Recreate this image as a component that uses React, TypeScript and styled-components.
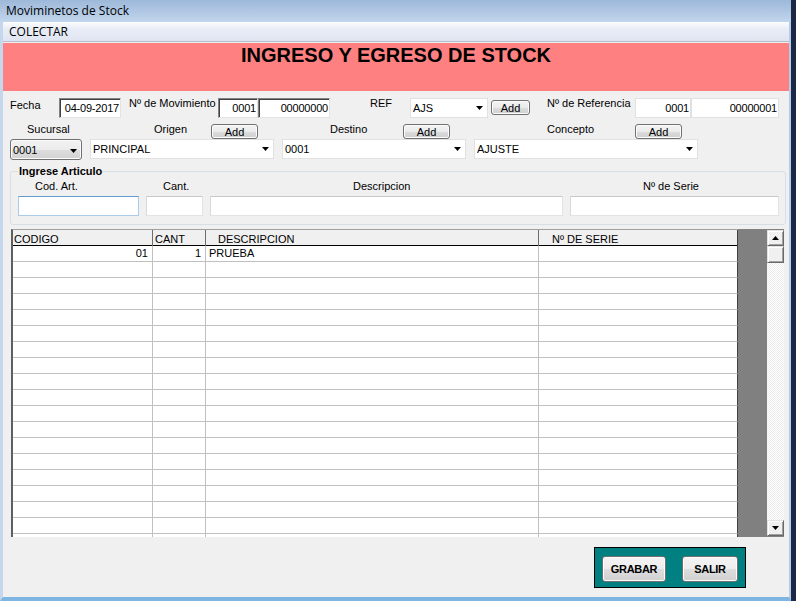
import React from 'react';
import styled, { createGlobalStyle, css } from 'styled-components';

const GlobalStyle = createGlobalStyle`
    html, body {
        margin: 0;
        padding: 0;
        background: #1b2946;
    }
    body {
        font-family: "Liberation Sans", Arial, sans-serif;
        font-size: 11px;
        color: #000;
    }
    * {
        box-sizing: border-box;
    }
`;

const Window = styled.div`
    width: 796px;
    height: 601px;
    display: flex;
    flex-direction: column;
    border-right: 5px solid #1b2946;
    overflow: hidden;
`;

const TitleBar = styled.div`
    height: 22px;
    flex-shrink: 0;
    padding-left: 6px;
    font-family: "Open Sans", "Noto Sans", sans-serif;
    font-size: 12px;
    line-height: 22px;
    background: linear-gradient(#9db8d9, #c2d6ed);
`;

const Body = styled.div`
    flex: 1;
    display: flex;
    flex-direction: column;
    background: #f0f0f0;
    border-left: 3px solid #c4d7ed;
    border-right: 2px solid #b5cde8;
    border-bottom: 4px solid #7db5e3;
`;

const MenuBar = styled.div`
    height: 20px;
    flex-shrink: 0;
    padding-left: 6px;
    border-bottom: 1px solid #b6bccc;
    background: linear-gradient(#fbfcfe 0%, #e9edf6 35%, #dfe5f1 100%);
    font-family: "Open Sans", "Noto Sans", sans-serif;
    font-size: 12px;
    line-height: 19px;
`;

const Banner = styled.div`
    margin-top: 1px;
    height: 48px;
    flex-shrink: 0;
    padding-top: 2px;
    background: #ff8080;
    text-align: center;
    font-size: 20px;
    line-height: 20px;
    font-weight: bold;
`;

const Row = styled.div<{ $mt?: number; $h: number }>`
    display: flex;
    align-items: flex-start;
    flex-shrink: 0;
    margin-top: ${p => p.$mt || 0}px;
    height: ${p => p.$h}px;
`;

const Label = styled.div<{ $w?: number; $ml?: number; $mt?: number }>`
    flex: none;
    ${p => p.$w && css`width: ${p.$w}px;`}
    margin-left: ${p => p.$ml || 0}px;
    margin-top: ${p => p.$mt || 0}px;
    line-height: 13px;
    white-space: nowrap;
`;

type BoxKind = 'sunken' | 'flat' | 'field' | 'focus';

const boxBorders: Record<BoxKind, ReturnType<typeof css>> = {
    sunken: css`
        border: 1px solid;
        border-color: #828282 #e3e3e3 #e3e3e3 #828282;
        box-shadow: inset 1px 1px 0 #404040;
    `,
    flat: css`
        border: 1px solid #e1e1e1;
    `,
    field: css`
        border: 1px solid;
        border-color: #c9c9c9 #e3e3e3 #e3e3e3 #d9d9d9;
    `,
    focus: css`
        border: 1px solid;
        border-color: #5f9bd0 #a9cbe9 #a9cbe9 #a9cbe9;
    `,
};

const TextBox = styled.div<{ $w: number; $ml?: number; $kind: BoxKind }>`
    flex: none;
    width: ${p => p.$w}px;
    height: 20px;
    margin-left: ${p => p.$ml || 0}px;
    padding: 0 1px 0 1px;
    display: flex;
    align-items: center;
    justify-content: flex-end;
    background: #fff;
    line-height: 13px;
    white-space: nowrap;
    letter-spacing: -0.2px;
    ${p => boxBorders[p.$kind]}
`;

const Combo = styled.div<{ $w: number; $ml?: number; $button?: boolean }>`
    flex: none;
    width: ${p => p.$w}px;
    height: ${p => p.$button ? 21 : 20}px;
    margin-left: ${p => p.$ml || 0}px;
    padding-left: 2px;
    padding-right: 4px;
    display: flex;
    align-items: center;
    line-height: 13px;
    ${p => p.$button ? css`
        border: 1px solid #707070;
        border-radius: 3px;
        background: linear-gradient(#f3f3f3 0%, #ebebeb 50%, #dddddd 51%, #d2d2d2 100%);
        box-shadow: inset 0 0 0 1px #fbfbfb;
        padding-top: 2px;
    ` : css`
        border: 1px solid #e1e1e1;
        background: #fff;
    `}
`;

const ComboText = styled.span`
    flex: 1;
    white-space: nowrap;
    overflow: hidden;
`;

const Arrow = ({ up }: { up?: boolean }) => (
    <svg width="7" height="4" viewBox="0 0 7 4">
        <polygon points={up ? '0,4 7,4 3.5,0' : '0,0 7,0 3.5,4'} fill="#000" />
    </svg>
);

const AddButton = styled.div<{ $w: number; $ml?: number; $mt?: number }>`
    flex: none;
    width: ${p => p.$w}px;
    height: 15px;
    margin-left: ${p => p.$ml || 0}px;
    margin-top: ${p => p.$mt || 0}px;
    display: flex;
    align-items: center;
    justify-content: center;
    border: 1px solid #707070;
    border-radius: 3px;
    background: linear-gradient(#f3f3f3 0%, #ebebeb 50%, #dddddd 51%, #cfcfcf 100%);
    box-shadow: inset 0 0 0 1px #fcfcfc;
    line-height: 13px;
    padding-top: 1px;
`;

const GroupBox = styled.fieldset`
    margin: 5px 0 0 7px;
    padding: 0 0 8px 0;
    width: 776px;
    min-width: 0;
    flex-shrink: 0;
    border: 1px solid #d5dfe5;
    border-radius: 3px;
`;

const GroupTitle = styled.legend`
    margin-left: 7px;
    padding: 0 1px;
    font-weight: bold;
    line-height: 13px;
`;

const Grid = styled.div`
    margin: 4px 0 0 8px;
    width: 773px;
    height: 308px;
    flex-shrink: 0;
    display: flex;
    background: #808080;
`;

const Table = styled.div`
    width: 727px;
    height: 100%;
    border-left: 2px solid #5f5f5f;
    border-top: 1px solid #a0a0a0;
    background: #fff;
    overflow: hidden;
`;

const columns = '140px 53px 333px 199px';

const HeaderRow = styled.div`
    display: grid;
    grid-template-columns: ${columns};
    height: 16px;
    border-bottom: 1px solid #000;
    background: #f0f0f0;
`;

const HeaderCell = styled.div<{ $pl: number; $last?: boolean }>`
    padding: 3px 0 0 ${p => p.$pl}px;
    line-height: 13px;
    white-space: nowrap;
    border-right: 1px solid ${p => p.$last ? '#404040' : '#6d6d6d'};
`;

const DataRow = styled.div`
    display: grid;
    grid-template-columns: ${columns};
    height: 16px;
`;

const Cell = styled.div<{ $align?: 'left' | 'right'; $last?: boolean }>`
    padding: 1px ${p => p.$align === 'right' ? '4px' : '0'} 0 3px;
    line-height: 13px;
    text-align: ${p => p.$align || 'left'};
    white-space: nowrap;
    overflow: hidden;
    border-right: 1px solid ${p => p.$last ? '#404040' : '#c0c0c0'};
    border-bottom: 1px solid #c0c0c0;
`;

const ScrollBar = styled.div`
    margin: 1px 0 1px auto;
    width: 17px;
    display: flex;
    flex-direction: column;
    background: repeating-conic-gradient(#ececec 0 25%, #fff 0 50%) 0 0 / 2px 2px;
`;

const ScrollPart = styled.div<{ $h: number }>`
    height: ${p => p.$h}px;
    flex-shrink: 0;
    display: flex;
    align-items: center;
    justify-content: center;
    background: #f0f0f0;
    border: 1px solid;
    border-color: #e3e3e3 #696969 #696969 #e3e3e3;
    box-shadow: inset 1px 1px 0 #fff, inset -1px -1px 0 #a0a0a0;
`;

const ScrollTrack = styled.div`
    flex: 1;
`;

const ActionPanel = styled.div`
    align-self: flex-end;
    margin: 10px 43px 0 0;
    padding: 8px 7px 5px 7px;
    display: flex;
    gap: 16px;
    border: 1px solid #000;
    background: #008080;
`;

const ActionButton = styled.div<{ $w: number }>`
    width: ${p => p.$w}px;
    height: 26px;
    display: flex;
    align-items: center;
    justify-content: center;
    border: 1px solid #707070;
    border-radius: 3px;
    background: linear-gradient(#f4f4f4 0%, #ececec 50%, #dedede 51%, #d0d0d0 100%);
    box-shadow: inset 0 0 0 1px #fcfcfc;
    font-weight: bold;
    font-size: 11px;
    letter-spacing: -0.3px;
`;

interface Item {
    codigo: string;
    cant: string;
    descripcion: string;
    serie: string;
}

const items: Item[] = [{ codigo: '01', cant: '1', descripcion: 'PRUEBA', serie: '' }];
const emptyRows = 18;

const App = () => {
    const rows: Item[] = [
        ...items,
        ...Array.from({ length: emptyRows }, () => ({ codigo: '', cant: '', descripcion: '', serie: '' })),
    ];

    return (
        <Window>
            <GlobalStyle />
            <TitleBar>Moviminetos de Stock</TitleBar>
            <Body>
                <MenuBar>COLECTAR</MenuBar>
                <Banner>INGRESO Y EGRESO DE STOCK</Banner>

                <Row $mt={7} $h={21}>
                    <Label $w={49} $ml={7} $mt={1}>Fecha</Label>
                    <TextBox $w={62} $kind="sunken">04-09-2017</TextBox>
                    <Label $w={89} $ml={8} $mt={-1}>Nº de Movimiento</Label>
                    <TextBox $w={40} $kind="sunken">0001</TextBox>
                    <TextBox $w={72} $kind="sunken">00000000</TextBox>
                    <Label $w={40} $ml={40} $mt={-1}>REF</Label>
                    <Combo $w={78}>
                        <ComboText>AJS</ComboText>
                        <Arrow />
                    </Combo>
                    <AddButton $w={39} $ml={3} $mt={2}>Add</AddButton>
                    <Label $w={88} $ml={17} $mt={-1}>Nº de Referencia</Label>
                    <TextBox $w={56} $kind="flat">0001</TextBox>
                    <TextBox $w={88} $kind="flat">00000001</TextBox>
                </Row>

                <Row $mt={4} $h={16}>
                    <Label $w={60} $ml={24}>Sucursal</Label>
                    <Label $w={50} $ml={67}>Origen</Label>
                    <AddButton $w={47} $ml={7} $mt={1}>Add</AddButton>
                    <Label $w={50} $ml={72}>Destino</Label>
                    <AddButton $w={47} $ml={23} $mt={1}>Add</AddButton>
                    <Label $w={60} $ml={97}>Concepto</Label>
                    <AddButton $w={47} $ml={28} $mt={1}>Add</AddButton>
                </Row>

                <Row $h={21}>
                    <Combo $w={72} $ml={7} $button>
                        <ComboText>0001</ComboText>
                        <Arrow />
                    </Combo>
                    <Combo $w={184} $ml={8}>
                        <ComboText>PRINCIPAL</ComboText>
                        <Arrow />
                    </Combo>
                    <Combo $w={184} $ml={8}>
                        <ComboText>0001</ComboText>
                        <Arrow />
                    </Combo>
                    <Combo $w={224} $ml={8}>
                        <ComboText>AJUSTE</ComboText>
                        <Arrow />
                    </Combo>
                </Row>

                <GroupBox>
                    <GroupTitle>Ingrese Articulo</GroupTitle>
                    <Row $mt={2} $h={13}>
                        <Label $w={128} $ml={24}>Cod. Art.</Label>
                        <Label $w={190}>Cant.</Label>
                        <Label $w={290}>Descripcion</Label>
                        <Label>Nº de Serie</Label>
                    </Row>
                    <Row $mt={3} $h={20}>
                        <TextBox $w={121} $ml={7} $kind="focus" />
                        <TextBox $w={57} $ml={7} $kind="field" />
                        <TextBox $w={353} $ml={7} $kind="field" />
                        <TextBox $w={209} $ml={7} $kind="field" />
                    </Row>
                </GroupBox>

                <Grid>
                    <Table>
                        <HeaderRow>
                            <HeaderCell $pl={1}>CODIGO</HeaderCell>
                            <HeaderCell $pl={2}>CANT</HeaderCell>
                            <HeaderCell $pl={12}>DESCRIPCION</HeaderCell>
                            <HeaderCell $pl={13} $last>Nº DE SERIE</HeaderCell>
                        </HeaderRow>
                        {rows.map((r, i) => (
                            <DataRow key={i}>
                                <Cell $align="right">{r.codigo}</Cell>
                                <Cell $align="right">{r.cant}</Cell>
                                <Cell>{r.descripcion}</Cell>
                                <Cell $last>{r.serie}</Cell>
                            </DataRow>
                        ))}
                    </Table>
                    <ScrollBar>
                        <ScrollPart $h={16}><Arrow up /></ScrollPart>
                        <ScrollPart $h={17} />
                        <ScrollTrack />
                        <ScrollPart $h={16}><Arrow /></ScrollPart>
                    </ScrollBar>
                </Grid>

                <ActionPanel>
                    <ActionButton $w={64}>GRABAR</ActionButton>
                    <ActionButton $w={56}>SALIR</ActionButton>
                </ActionPanel>
            </Body>
        </Window>
    );
};

export default App;
